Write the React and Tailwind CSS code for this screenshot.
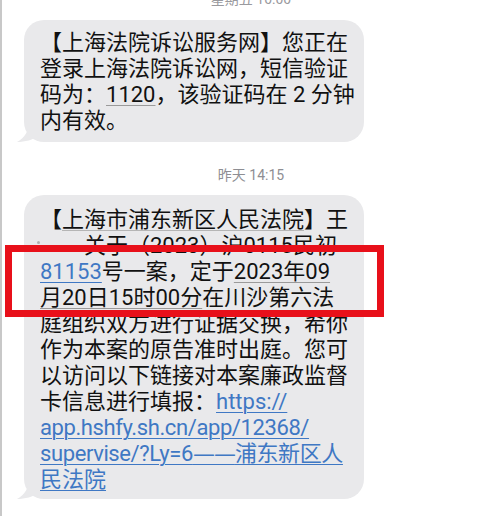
const font = { fontFamily: 'Roboto, "Noto Sans CJK SC", sans-serif' };

function Tail() {
  return (
    <svg
      className="absolute -left-[7px] bottom-0"
      width="22"
      height="20"
      viewBox="0 0 22 20"
    >
      <path d="M22 0 L12 0 C12 8 8 16 0 20 C8 20 16 18 22 13 Z" fill="#e9e9eb" />
    </svg>
  );
}

function Bubble({ children, className = "" }) {
  return (
    <div
      className={`relative ml-[22px] w-[340px] rounded-[20px] bg-[#e9e9eb] px-[16px] text-[22px] leading-[26px] text-[#111] ${className}`}
    >
      <Tail />
      <div className="relative">{children}</div>
    </div>
  );
}

const Line = ({ children }) => (
  <div className="whitespace-nowrap">{children}</div>
);

const dd = "underline decoration-[#9a9a9a] decoration-1 underline-offset-[3px]";
const link =
  "text-[#3f78c4] underline decoration-[#3f78c4] decoration-1 underline-offset-[3px]";

export default function App() {
  return (
    <div
      className="relative h-[516px] w-[491px] overflow-hidden border-l-2 border-[#c8c8c8] bg-white"
      style={font}
    >
      <div className="-mt-[9px] h-[16px] pl-[9px] text-center text-[14px] leading-[16px] text-[#9a9a9e]">
        星期五 10:00
      </div>

      <Bubble className="mt-[13px] pt-[10px] pb-[8px]">
        <Line>【上海法院诉讼服务网】您正在</Line>
        <Line>登录上海法院诉讼网，短信验证</Line>
        <Line>
          码为：<span className={dd}>1120</span>，该验证码在 2 分钟
        </Line>
        <Line>内有效。</Line>
      </Bubble>

      <div className="mt-[24px] pl-[9px] text-center text-[14px] leading-[18px] text-[#8e8e93]">
        昨天 14:15
      </div>

      <Bubble className="mt-[11px] pt-[12px] pb-[6px]">
        <Line>
          【<span className="underline decoration-[#b5b5b5] decoration-1 underline-offset-[3px]">上海市浦东新区人民法院</span>】王
        </Line>
        <Line>
          <span className="relative inline-block h-[26px] w-[44px] align-top">
            <span className="absolute left-[-3px] top-[8px] h-[3px] w-[3px] rounded-full bg-[#b0b0b0]" />
          </span>
          关于（2023）沪0115民初
        </Line>
        <Line>
          <span className={link}>81153</span>号一案，定于
          <span className={dd}>2023年09</span>
        </Line>
        <Line>
          <span className={dd}>月20日15时00分</span>在川沙第六法
        </Line>
        <Line>庭组织双方进行证据交换，希你</Line>
        <Line>作为本案的原告准时出庭。您可</Line>
        <Line>以访问以下链接对本案廉政监督</Line>
        <Line>
          卡信息进行填报：<span className={link}>https://</span>
        </Line>
        <Line>
          <span className={`${link} tracking-[-0.4px]`}>app.hshfy.sh.cn/app/12368/</span>
        </Line>
        <Line>
          <span className={`${link} tracking-[-0.4px]`}>
            supervise/?Ly=6
            <span className="font-['DejaVu_Sans'] tracking-[-1px]">——</span>
            浦东新区人
          </span>
        </Line>
        <Line>
          <span className={link}>民法院</span>
        </Line>
      </Bubble>

      <div className="pointer-events-none absolute left-[3px] top-[245px] h-[72px] w-[379px] border-[7px] border-[#e8101a]" />
    </div>
  );
}
